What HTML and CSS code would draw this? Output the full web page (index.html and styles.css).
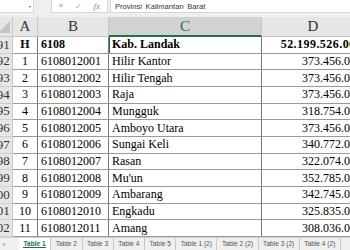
FILE: index.html
```html
<!DOCTYPE html>
<html>
<head>
<meta charset="utf-8">
<link rel="stylesheet" href="styles.css">
</head>
<body>
<div class="formula">
  <div class="namebox"><span class="caret"></span></div>
  <div class="btns"><span class="fb-x">✕</span><span class="fb-ok">✓</span><span class="fb-fx">fx</span></div>
  <div class="input">Provinsi Kalimantan Barat</div>
</div>
<div class="sheet">
  <div class="corner"><span class="tri"></span></div>
  <div class="ch">A</div><div class="ch">B</div><div class="ch sel">C</div><div class="ch">D</div>

  <div class="rh">191</div><div class="c ctr b">H</div><div class="c b">6108</div><div class="c b act">Kab. Landak</div><div class="c num b total">52.199.526.000</div>
  <div class="rh">192</div><div class="c ctr">1</div><div class="c">6108012001</div><div class="c">Hilir Kantor</div><div class="c num">373.456.000</div>
  <div class="rh">193</div><div class="c ctr">2</div><div class="c">6108012002</div><div class="c">Hilir Tengah</div><div class="c num">373.456.000</div>
  <div class="rh">194</div><div class="c ctr">3</div><div class="c">6108012003</div><div class="c">Raja</div><div class="c num">373.456.000</div>
  <div class="rh">195</div><div class="c ctr">4</div><div class="c">6108012004</div><div class="c">Mungguk</div><div class="c num">318.754.000</div>
  <div class="rh">196</div><div class="c ctr">5</div><div class="c">6108012005</div><div class="c">Amboyo Utara</div><div class="c num">373.456.000</div>
  <div class="rh">197</div><div class="c ctr">6</div><div class="c">6108012006</div><div class="c">Sungai Keli</div><div class="c num">340.772.000</div>
  <div class="rh">198</div><div class="c ctr">7</div><div class="c">6108012007</div><div class="c">Rasan</div><div class="c num">322.074.000</div>
  <div class="rh">199</div><div class="c ctr">8</div><div class="c">6108012008</div><div class="c">Mu'un</div><div class="c num">352.785.000</div>
  <div class="rh">200</div><div class="c ctr">9</div><div class="c">6108012009</div><div class="c">Ambarang</div><div class="c num">342.745.000</div>
  <div class="rh">201</div><div class="c ctr">10</div><div class="c">6108012010</div><div class="c">Engkadu</div><div class="c num">325.835.000</div>
  <div class="rh">202</div><div class="c ctr">11</div><div class="c">6108012011</div><div class="c">Amang</div><div class="c num">308.036.000</div>
</div>
<div class="tabs">
  <div class="nav">◂</div>
  <div class="tab active">Table 1</div>
  <div class="tab">Table 2</div>
  <div class="tab">Table 3</div>
  <div class="tab">Table 4</div>
  <div class="tab">Table 5</div>
  <div class="tab">Table 1 (2)</div>
  <div class="tab">Table 2 (2)</div>
  <div class="tab">Table 3 (2)</div>
  <div class="tab">Table 4 (2)</div>
</div>
</body>
</html>
```
FILE: styles.css
```css
html, body {
  margin: 0;
  padding: 0;
  width: 350px;
  height: 250px;
  overflow: hidden;
  background: #ffffff;
}
body {
  font-family: "Liberation Serif", serif;
}
.formula {
  height: 17px;
  box-sizing: border-box;
  padding-bottom: 4px;
  background: #efefef;
  display: flex;
  align-items: stretch;
}
.namebox {
  width: 33px;
  background: #fff;
  border-right: 1px solid #d6d6d6;
  border-bottom: 1px solid #d6d6d6;
  position: relative;
}
.caret {
  position: absolute;
  right: 2px;
  top: 6px;
  width: 0;
  height: 0;
  border-left: 1.5px solid transparent;
  border-right: 1.5px solid transparent;
  border-top: 2px solid #666;
}
.btns {
  margin-left: 17px;
  width: 55px;
  background: #fff;
  border: 1px solid #d6d6d6;
  border-top: none;
  display: flex;
  align-items: center;
  color: #a6a6a6;
  font-family: "DejaVu Sans", sans-serif;
  font-size: 8px;
}
.fb-x { margin-left: 6px; font-size: 7px; }
.fb-ok { margin-left: 11px; font-size: 8px; }
.fb-fx { margin-left: 12px; font-family: "Liberation Serif", serif; font-style: italic; font-size: 9px; color: #8a8a8a; }
.input {
  margin-left: 2px;
  flex: 1;
  background: #fff;
  border-left: 1px solid #d6d6d6;
  border-bottom: 1px solid #d6d6d6;
  font-family: "Liberation Sans", sans-serif;
  font-size: 7.6px;
  word-spacing: 1.5px;
  color: #333;
  padding-left: 4px;
  display: flex;
  align-items: center;
}
.sheet {
  margin-left: -12px;
  width: 377px;
  display: grid;
  grid-template-columns: 25px 25px 71px 153px 103px;
  grid-template-rows: 20px repeat(12, 16.67px);
}
.corner {
  background: #e6e6e6;
  border-right: 1px solid #c6c6c6;
  border-bottom: 1px solid #c6c6c6;
  position: relative;
}
.tri {
  position: absolute;
  right: 2px;
  bottom: 3px;
  width: 0;
  height: 0;
  border-left: 12px solid transparent;
  border-bottom: 12px solid #c4c4c4;
}
.ch {
  background: #e6e6e6;
  border-right: 1px solid #c6c6c6;
  border-bottom: 1px solid #c6c6c6;
  display: flex;
  align-items: center;
  justify-content: center;
  font-size: 15px;
  color: #333;
  box-sizing: border-box;
}
.ch.sel {
  background: #d2d2d2;
  color: #217346;
  border-bottom: 2px solid #217346;
}
.rh {
  background: #e6e6e6;
  border-right: 1px solid #c6c6c6;
  border-bottom: 1px solid #cfcfcf;
  display: flex;
  align-items: center;
  justify-content: center;
  font-size: 13px;
  color: #333;
  box-sizing: border-box;
}
.c {
  border-right: 1px solid #7a7a7a;
  border-bottom: 1px solid #9a9a9a;
  box-sizing: border-box;
  display: flex;
  align-items: center;
  font-size: 12px;
  color: #000;
  padding: 0 2px 0 3px;
  white-space: nowrap;
  overflow: hidden;
}
.c.ctr { justify-content: center; padding: 0; }
.c.num { justify-content: flex-end; }
.c.b { font-weight: bold; }
.c.total { letter-spacing: 0.45px; }
.c.act { box-shadow: inset 1px 0 0 #217346; }
.tabs {
  height: 13px;
  background: #efefef;
  border-top: 1px solid #d0d0d0;
  box-sizing: border-box;
  display: flex;
  align-items: stretch;
  font-family: "Liberation Sans", sans-serif;
  font-size: 6.6px;
  color: #555;
  white-space: nowrap;
}
.nav {
  width: 19px;
  color: #b0b0b0;
  font-size: 6px;
  padding-left: 2px;
  box-sizing: border-box;
  display: flex;
  align-items: center;
}
.tab {
  padding: 0 4.5px;
  border-right: 1px solid #c8c8c8;
  display: flex;
  align-items: center;
}
.tab.active {
  background: #fff;
  color: #217346;
  font-weight: bold;
  position: relative;
}
.tab.active::after {
  content: "";
  position: absolute;
  left: 4px;
  right: 4px;
  bottom: 2px;
  height: 1px;
  background: #217346;
}
```
